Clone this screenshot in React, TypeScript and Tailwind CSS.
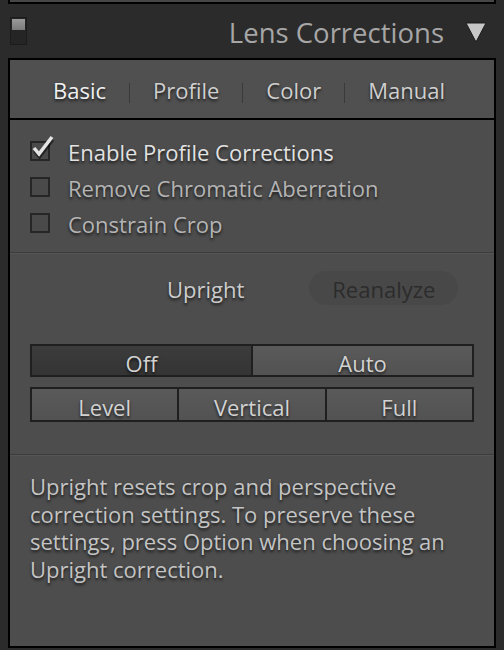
import React from 'react';

const shadow = '[text-shadow:0_2px_3px_rgba(0,0,0,0.7)]';

const Checkbox = ({ checked }: { checked?: boolean }) => (
    <div className="relative w-[20px] h-[20px] border-2 border-[#262626] bg-[#4a4a4a] shrink-0">
        {checked && (
            <svg className="absolute -left-[1px] -top-[8px]" width="24" height="24" viewBox="0 0 24 24">
                <path d="M3 14 L8 20 L21 3" fill="none" stroke="rgba(0,0,0,0.5)" strokeWidth="4" transform="translate(0.5 1.5)" />
                <path d="M3 13 L8 19 L21 2" fill="none" stroke="#e4e4e4" strokeWidth="3.5" />
            </svg>
        )}
    </div>
);

const CheckRow = ({ label, checked }: { label: string; checked?: boolean }) => (
    <div className="flex items-center h-[36px] pl-[20px]">
        <Checkbox checked={checked} />
        <span className={`ml-[18px] text-[22px] pt-[3px] ${checked ? 'text-[#e2e2e2]' : 'text-[#b4b4b4]'} ${shadow}`}>{label}</span>
    </div>
);

const Segment = ({ label, active, last }: { label: string; active?: boolean; last?: boolean }) => (
    <div
        className={`flex-1 flex items-center justify-center text-[22px] text-[#d2d2d2] ${shadow} ${
            last ? '' : 'border-r-2 border-[#1f1f1f]'
        } ${active ? 'bg-gradient-to-b from-[#3c3c3c] to-[#343434]' : 'bg-gradient-to-b from-[#5a5a5a] to-[#525252]'}`}
    >
        <span className="relative top-[3px]">{label}</span>
    </div>
);

const Divider = () => (
    <div>
        <div className="h-px bg-[#3c3c3c]" />
        <div className="h-px bg-[#555555]" />
    </div>
);

const Sep = () => <span className="mx-[23px] w-px h-[20px] bg-[#3a3a3a] mt-[8px]" />;

export default function App() {
    return (
        <div className="w-[504px] h-[650px] bg-[#2b2b2b] overflow-hidden flex flex-col font-['Open_Sans',sans-serif]">
            {/* previous panel edge */}
            <div className="mx-[8px] h-[4px] bg-[#464646] border-x-2 border-b-2 border-black" />

            {/* Header */}
            <div className="h-[54px] flex items-center pl-[10px] pr-[17px]">
                <div className="w-[17px] h-[28px] bg-[#252525] border border-[#1c1c1c] p-px flex flex-col">
                    <div className="h-[11px] bg-gradient-to-b from-[#9a9a9a] to-[#7a7a7a]" />
                </div>
                <div className="flex-1" />
                <span className="text-[27.5px] text-[#a6a6a6] pt-[3px]">Lens Corrections</span>
                <svg className="ml-[21px] mt-[2px]" width="22" height="22" viewBox="0 0 22 22">
                    <path d="M1 2 L21 2 L11 21 Z" fill="#c6c6c6" stroke="#1a1a1a" strokeWidth="1" />
                </svg>
            </div>

            {/* Panel */}
            <div className="mx-[8px] flex-1 border-2 border-black bg-[#4d4d4d] flex flex-col">
                {/* Tabs */}
                <div className="h-[60px] bg-[#505050] border-b-2 border-black flex items-center pl-[43px] text-[22px]">
                    <span className={`text-[#f0f0f0] pt-[2px] ${shadow}`}>Basic</span>
                    <Sep />
                    <span className={`text-[#cfcfcf] pt-[2px] ${shadow}`}>Profile</span>
                    <Sep />
                    <span className={`text-[#cfcfcf] pt-[2px] ${shadow}`}>Color</span>
                    <Sep />
                    <span className={`text-[#cfcfcf] pt-[2px] ${shadow}`}>Manual</span>
                </div>

                {/* Checkboxes */}
                <div className="pt-[13px] pb-[11px]">
                    <CheckRow label="Enable Profile Corrections" checked />
                    <CheckRow label="Remove Chromatic Aberration" />
                    <CheckRow label="Constrain Crop" />
                </div>
                <Divider />

                {/* Upright */}
                <div className="pt-[17px] pb-[32px] px-[20px]">
                    <div className="flex items-center h-[34px]">
                        <span className={`ml-[137px] text-[22px] pt-[3px] text-[#cccccc] ${shadow}`}>Upright</span>
                        <div className="ml-[65px] w-[149px] h-[34px] pt-[3px] rounded-full bg-[#484848] flex items-center justify-center text-[22px] text-[#2c2c2c]">
                            Reanalyze
                        </div>
                    </div>
                    <div className="mt-[39px] h-[33px] border-2 border-[#1f1f1f] flex">
                        <Segment label="Off" active />
                        <Segment label="Auto" last />
                    </div>
                    <div className="mt-[10px] h-[35px] border-2 border-[#1f1f1f] flex">
                        <Segment label="Level" />
                        <Segment label="Vertical" />
                        <Segment label="Full" last />
                    </div>
                </div>
                <Divider />

                {/* Description */}
                <p className={`pt-[17px] pl-[20px] text-[22px] leading-[27.7px] text-[#c4c4c4] ${shadow}`}>
                    Upright resets crop and perspective
                    <br />
                    correction settings. To preserve these
                    <br />
                    settings, press Option when choosing an
                    <br />
                    Upright correction.
                </p>
            </div>
            <div className="h-[2px]" />
        </div>
    );
}
